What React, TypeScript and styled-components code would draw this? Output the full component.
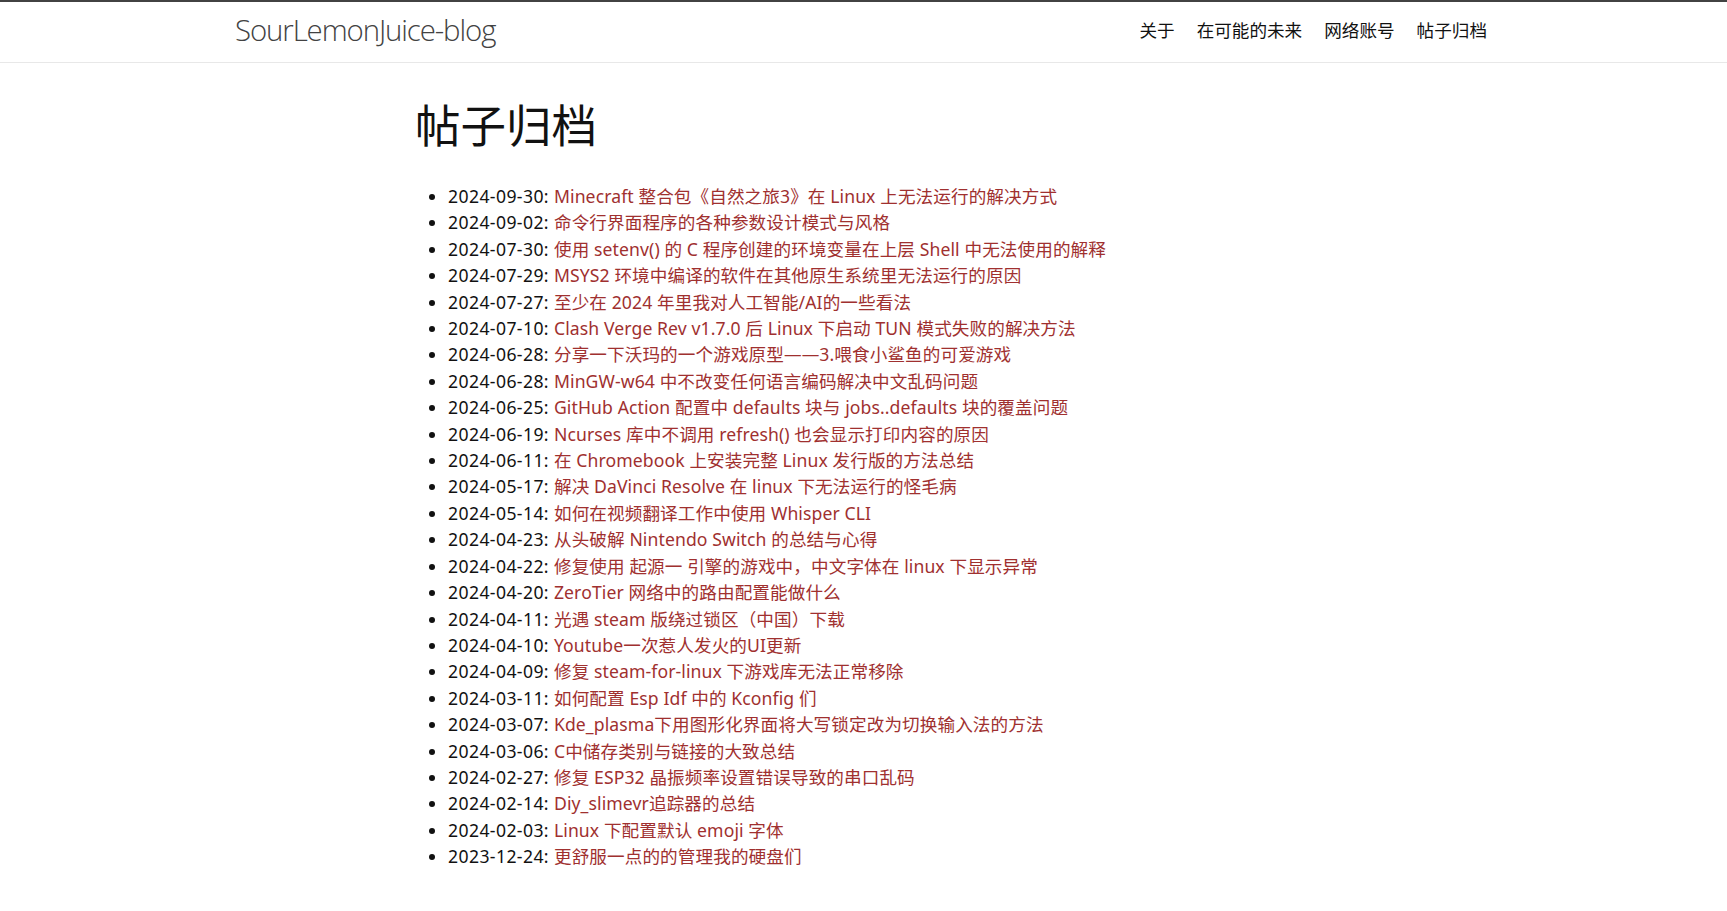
import React from "react";
import styled, { createGlobalStyle } from "styled-components";

const GlobalStyle = createGlobalStyle`
  html, body {
    margin: 0;
    padding: 0;
    background: #fff;
  }
  body {
    font-family: "Noto Sans", "Noto Sans CJK SC", sans-serif;
    color: #111;
    font-size: 17.6px;
    line-height: 1.5;
  }
`;

const Header = styled.header`
  border-top: 2px solid #424242;
  border-bottom: 1px solid #e8e8e8;
  height: 60px;
`;

const HeaderInner = styled.div`
  width: 1257px;
  margin: 0 auto;
  height: 60px;
  box-sizing: border-box;
  padding-bottom: 4px;
  display: flex;
  align-items: center;
  justify-content: space-between;
`;

const SiteTitle = styled.a`
  font-family: "Open Sans", "Noto Sans CJK SC", sans-serif;
  font-weight: 300;
  font-size: 29.4px;
  letter-spacing: -1.1px;
  line-height: 56px;
  color: #424242;
  text-decoration: none;
`;

const Nav = styled.nav`
  display: flex;
  gap: 22px;
  padding-right: 5px;
`;

const NavLink = styled.a`
  font-family: "Noto Sans CJK SC", sans-serif;
  font-size: 17.6px;
  line-height: 56px;
  color: #111;
  text-decoration: none;
`;

const Main = styled.main`
  width: 897px;
  margin: 0 auto;
  padding: 33px 0 40px;
`;

const Heading = styled.h1`
  font-family: "Noto Sans CJK SC", sans-serif;
  font-weight: 400;
  font-size: 45.5px;
  line-height: 55px;
  margin: 0 0 32px;
  color: #111;
`;

const List = styled.ul`
  margin: 0;
  padding-left: 33px;
  list-style: disc;
`;

const Item = styled.li`
  font-size: 17.6px;
  line-height: 26.4px;
  letter-spacing: 0.4px;
  color: #111;
`;

const PostLink = styled.a`
  color: #a0302f;
  letter-spacing: 0.1px;
  text-decoration: none;
`;

const posts: [string, string][] = [
  ["2024-09-30", "Minecraft 整合包《自然之旅3》在 Linux 上无法运行的解决方式"],
  ["2024-09-02", "命令行界面程序的各种参数设计模式与风格"],
  ["2024-07-30", "使用 setenv() 的 C 程序创建的环境变量在上层 Shell 中无法使用的解释"],
  ["2024-07-29", "MSYS2 环境中编译的软件在其他原生系统里无法运行的原因"],
  ["2024-07-27", "至少在 2024 年里我对人工智能/AI的一些看法"],
  ["2024-07-10", "Clash Verge Rev v1.7.0 后 Linux 下启动 TUN 模式失败的解决方法"],
  ["2024-06-28", "分享一下沃玛的一个游戏原型——3.喂食小鲨鱼的可爱游戏"],
  ["2024-06-28", "MinGW-w64 中不改变任何语言编码解决中文乱码问题"],
  ["2024-06-25", "GitHub Action 配置中 defaults 块与 jobs..defaults 块的覆盖问题"],
  ["2024-06-19", "Ncurses 库中不调用 refresh() 也会显示打印内容的原因"],
  ["2024-06-11", "在 Chromebook 上安装完整 Linux 发行版的方法总结"],
  ["2024-05-17", "解决 DaVinci Resolve 在 linux 下无法运行的怪毛病"],
  ["2024-05-14", "如何在视频翻译工作中使用 Whisper CLI"],
  ["2024-04-23", "从头破解 Nintendo Switch 的总结与心得"],
  ["2024-04-22", "修复使用 起源一 引擎的游戏中，中文字体在 linux 下显示异常"],
  ["2024-04-20", "ZeroTier 网络中的路由配置能做什么"],
  ["2024-04-11", "光遇 steam 版绕过锁区（中国）下载"],
  ["2024-04-10", "Youtube一次惹人发火的UI更新"],
  ["2024-04-09", "修复 steam-for-linux 下游戏库无法正常移除"],
  ["2024-03-11", "如何配置 Esp Idf 中的 Kconfig 们"],
  ["2024-03-07", "Kde_plasma下用图形化界面将大写锁定改为切换输入法的方法"],
  ["2024-03-06", "C中储存类别与链接的大致总结"],
  ["2024-02-27", "修复 ESP32 晶振频率设置错误导致的串口乱码"],
  ["2024-02-14", "Diy_slimevr追踪器的总结"],
  ["2024-02-03", "Linux 下配置默认 emoji 字体"],
  ["2023-12-24", "更舒服一点的的管理我的硬盘们"],
];

const navItems = ["关于", "在可能的未来", "网络账号", "帖子归档"];

export default function App() {
  return (
    <>
      <GlobalStyle />
      <Header>
        <HeaderInner>
          <SiteTitle href="#">SourLemonJuice-blog</SiteTitle>
          <Nav>
            {navItems.map((n) => (
              <NavLink key={n} href="#">
                {n}
              </NavLink>
            ))}
          </Nav>
        </HeaderInner>
      </Header>
      <Main>
        <Heading>帖子归档</Heading>
        <List>
          {posts.map(([d, t], i) => (
            <Item key={i}>
              {d}: <PostLink href="#">{t}</PostLink>
            </Item>
          ))}
        </List>
      </Main>
    </>
  );
}
